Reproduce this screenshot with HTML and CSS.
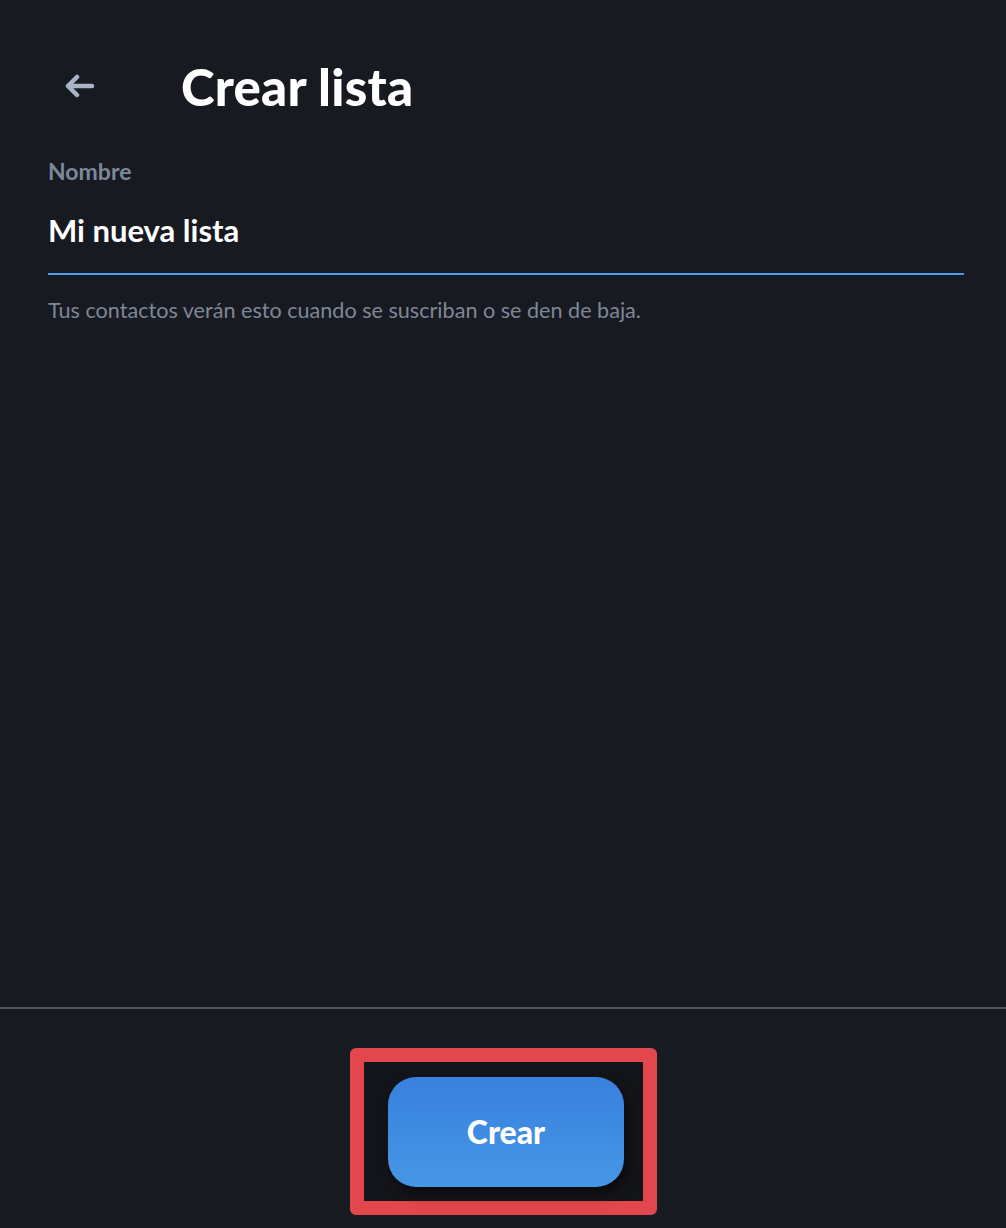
FILE: index.html
```html
<!DOCTYPE html>
<html lang="es">
<head>
    <meta charset="UTF-8">
    <meta name="viewport" content="width=device-width, initial-scale=1.0">
    <title>Crear lista</title>
    <link rel="stylesheet" href="styles.css">
</head>
<body>
    <header class="topbar">
        <button class="back" aria-label="Atrás">
            <svg width="32" height="24" viewBox="0 0 32 24">
                <path d="M29 12H5M14 3L5 12L14 21" fill="none" stroke="#a9b5c6" stroke-width="4.5" stroke-linecap="round" stroke-linejoin="round"/>
            </svg>
        </button>
        <h1>Crear lista</h1>
    </header>
    <main class="form">
        <label for="listName">Nombre</label>
        <input type="text" id="listName" value="Mi nueva lista">
        <p class="hint">Tus contactos verán esto cuando se suscriban o se den de baja.</p>
    </main>
    <footer>
        <div class="highlight">
            <button class="create">Crear</button>
        </div>
    </footer>
</body>
</html>
```

FILE: styles.css
```css
html, body {
    height: 100%;
}
body {
    font-family: 'Lato', 'Noto Sans', sans-serif;
    background-color: #181a22;
    margin: 0;
    display: flex;
    flex-direction: column;
    color: #fff;
}
.topbar {
    display: flex;
    align-items: center;
    height: 174px;
    padding-left: 62px;
    box-sizing: border-box;
}
.back {
    background: none;
    border: none;
    padding: 0;
    width: 34px;
    height: 26px;
    margin-right: 85px;
    cursor: pointer;
}
.topbar h1 {
    margin: 0;
    font-size: 51px;
    line-height: 60px;
    font-weight: 900;
    letter-spacing: 0.2px;
}
.form {
    flex: 1;
    padding: 0 42px 0 48px;
    margin-top: -17px;
}
.form label {
    display: block;
    font-size: 23px;
    line-height: 28px;
    font-weight: 700;
    color: #7c8898;
}
.form input[type="text"] {
    display: block;
    width: 100%;
    box-sizing: border-box;
    margin-top: 27px;
    padding: 0 0 24px;
    background: none;
    border: none;
    border-bottom: 2px solid #4b9de9;
    color: #fff;
    font-family: inherit;
    font-size: 31px;
    line-height: 37px;
    font-weight: 700;
    outline: none;
}
.hint {
    margin: 23px 0 0;
    font-size: 21.6px;
    line-height: 25px;
    color: #7d8795;
}
footer {
    border-top: 2px solid #4a5262;
    height: 221px;
    box-sizing: border-box;
    display: flex;
    justify-content: center;
    padding-top: 39px;
}
.highlight {
    box-sizing: border-box;
    width: 307px;
    height: 167px;
    border: 14px solid #e1474c;
    border-radius: 6px;
    background-color: #14151a;
    display: flex;
    justify-content: center;
    align-items: center;
    padding-left: 5px;
    margin-left: 1px;
}
.create {
    width: 236px;
    height: 110px;
    border: none;
    border-radius: 28px;
    background: linear-gradient(180deg, #3880de, #4697e5);
    box-shadow: 4px 6px 14px rgba(0, 0, 0, 0.55);
    color: #fff;
    font-family: inherit;
    font-size: 32px;
    font-weight: 900;
    cursor: pointer;
}
```
